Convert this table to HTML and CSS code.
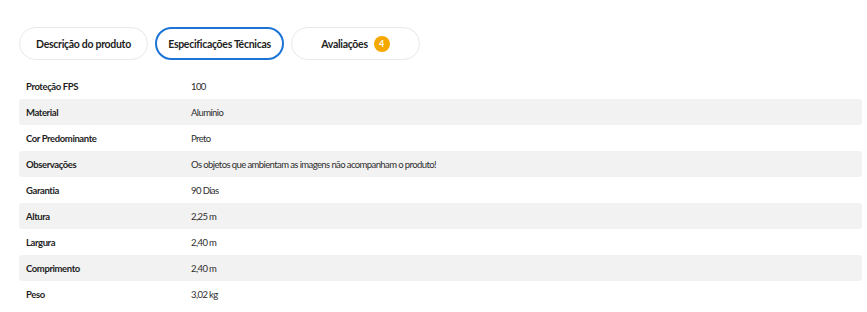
FILE: index.html
```html
<!DOCTYPE html>
<html lang="pt-BR">
<head>
<meta charset="utf-8">
<title>Especificações Técnicas</title>
<link rel="stylesheet" href="styles.css">
</head>
<body>
<div class="wrap">
  <nav class="tabs">
    <button class="tab">Descrição do produto</button>
    <button class="tab active">Especificações Técnicas</button>
    <button class="tab">Avaliações <span class="badge">4</span></button>
  </nav>
  <div class="specs">
    <div class="row"><span class="label">Proteção FPS</span><span class="value">100</span></div>
    <div class="row alt"><span class="label">Material</span><span class="value">Alumínio</span></div>
    <div class="row"><span class="label">Cor Predominante</span><span class="value">Preto</span></div>
    <div class="row alt"><span class="label">Observações</span><span class="value">Os objetos que ambientam as imagens não acompanham o produto!</span></div>
    <div class="row"><span class="label">Garantia</span><span class="value">90 Dias</span></div>
    <div class="row alt"><span class="label">Altura</span><span class="value">2,25 m</span></div>
    <div class="row"><span class="label">Largura</span><span class="value">2,40 m</span></div>
    <div class="row alt"><span class="label">Comprimento</span><span class="value">2,40 m</span></div>
    <div class="row"><span class="label">Peso</span><span class="value">3,02 kg</span></div>
  </div>
</div>
</body>
</html>
```
FILE: styles.css
```css
* { box-sizing: border-box; }
html, body { margin: 0; background: #fff; }
body { font-family: "Lato", "Noto Sans", sans-serif; color: #222; }
.wrap { padding: 27px 5px 0 19px; }
.tabs { display: flex; gap: 7px; }
.tab {
  width: 129px; height: 33px;
  border: 1.5px solid #e8e8e8; border-radius: 17px;
  background: #fff; font-family: inherit;
  font-size: 10.5px; font-weight: 700; color: #1e1e1e; letter-spacing: -0.3px;
  display: flex; align-items: center; justify-content: center; gap: 6px;
  padding: 0;
}
.tab.active { border: 2px solid #1b74d6; }
.badge {
  width: 16px; height: 16px; border-radius: 50%;
  background: #f5a800; color: #fff; font-size: 9px; font-weight: 700; letter-spacing: 0;
  display: inline-flex; align-items: center; justify-content: center;
}
.specs { margin-top: 13px; }
.row { display: flex; align-items: center; height: 26px; border-radius: 3px; font-size: 9.5px; }
.row.alt { background: #f2f2f2; }
.label { width: 172px; padding-left: 7px; font-weight: 700; color: #1e1e1e; letter-spacing: -0.4px; }
.value { color: #2e2e2e; letter-spacing: -0.6px; }
```
